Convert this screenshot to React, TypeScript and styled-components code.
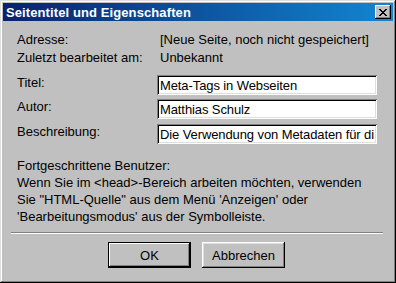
import { styled, createGlobalStyle } from 'styled-components';

const GlobalStyle = createGlobalStyle`
  html, body {
    margin: 0;
    padding: 0;
    background: #c0c0c0;
  }
  * {
    box-sizing: border-box;
  }
`;

const Window = styled.div`
  width: 396px;
  height: 283px;
  padding: 3px;
  display: flex;
  flex-direction: column;
  background: #c0c0c0;
  box-shadow:
    inset -1px -1px #000,
    inset 1px 1px #dfdfdf,
    inset -2px -2px #808080,
    inset 2px 2px #fff;
  font-family: 'Liberation Sans', Arial, sans-serif;
  font-size: 13px;
  color: #000;
`;

const TitleBar = styled.div`
  height: 18px;
  display: flex;
  align-items: center;
  padding: 0 2px 0 3px;
  background: linear-gradient(to right, #08226c, #1286d2);
`;

const Title = styled.div`
  flex: 1;
  color: #fff;
  font-weight: bold;
  font-size: 13px;
  letter-spacing: 0.1px;
`;

const CloseButton = styled.div`
  width: 16px;
  height: 14px;
  display: flex;
  align-items: center;
  justify-content: center;
  background: #c0c0c0;
  box-shadow:
    inset -1px -1px #000,
    inset 1px 1px #fff,
    inset -2px -2px #808080;
`;

const Body = styled.div`
  flex: 1;
  display: flex;
  flex-direction: column;
  padding: 10px 14px 0 14px;
`;

const InfoGrid = styled.div`
  display: grid;
  grid-template-columns: 143px 1fr;
  align-items: start;
`;

const Label = styled.div<{ $top?: number }>`
  line-height: 18px;
  height: 18px;
  margin-top: ${({ $top }) => ($top ? `${$top - 1}px` : '0')};
  white-space: nowrap;
`;

const Value = styled.div`
  line-height: 18px;
  height: 18px;
  white-space: nowrap;
`;

const Field = styled.input<{ $top: number }>`
  display: block;
  width: 220px;
  height: 20px;
  margin-top: ${({ $top }) => $top}px;
  margin-left: -3px;
  padding: 0 3px 0 3px;
  border: none;
  outline: none;
  background: #fff;
  font-family: 'Liberation Sans', Arial, sans-serif;
  font-size: 13px;
  letter-spacing: -0.1px;
  color: #000;
  box-shadow:
    inset 1px 1px #808080,
    inset -1px -1px #fff,
    inset 2px 2px #000,
    inset -2px -2px #dfdfdf;
`;

const Hint = styled.div`
  margin-top: 13px;
  line-height: 17px;
  white-space: nowrap;
`;

const Separator = styled.div`
  margin: 7px -4px 0 -6px;
  height: 2px;
  border-top: 1px solid #808080;
  border-bottom: 1px solid #fff;
`;

const ButtonRow = styled.div`
  display: flex;
  justify-content: center;
  gap: 11px;
  margin-top: 8px;
  padding-right: 3px;
`;

const Button = styled.div<{ $default?: boolean }>`
  width: 83px;
  height: 26px;
  display: flex;
  align-items: center;
  justify-content: center;
  background: #c0c0c0;
  box-shadow: ${({ $default }) =>
    $default
      ? 'inset -1px -1px #000, inset 1px 1px #000, inset -2px -2px #000, inset 2px 2px #fff, inset -3px -3px #808080'
      : 'inset -1px -1px #000, inset 1px 1px #fff, inset -2px -2px #808080, inset 2px 2px #dfdfdf'};
`;

const CloseIcon = () => (
  <svg width="8" height="7" viewBox="0 0 8 7">
    <path d="M0 0h2v1h1v1h2v-1h1v-1h2v1h-1v1h-1v1h-1v1h1v1h1v1h1v1h-2v-1h-1v-1h-2v1h-1v1h-2v-1h1v-1h1v-1h1v-1h-1v-1h-1v-1h-1z" fill="#000" />
  </svg>
);

export default function App() {
  return (
    <>
      <GlobalStyle />
      <Window>
        <TitleBar>
          <Title>Seitentitel und Eigenschaften</Title>
          <CloseButton>
            <CloseIcon />
          </CloseButton>
        </TitleBar>
        <Body>
          <InfoGrid>
            <Label>Adresse:</Label>
            <Value>[Neue Seite, noch nicht gespeichert]</Value>
            <Label>Zuletzt bearbeitet am:</Label>
            <Value>Unbekannt</Value>
            <Label $top={8}>Titel:</Label>
            <Field $top={8} defaultValue="Meta-Tags in Webseiten" />
            <Label $top={4}>Autor:</Label>
            <Field $top={4} defaultValue="Matthias Schulz" />
            <Label $top={5}>Beschreibung:</Label>
            <Field $top={5} defaultValue="Die Verwendung von Metadaten für die Suchmaschinen" />
          </InfoGrid>
          <Hint>
            Fortgeschrittene Benutzer:
            <br />
            Wenn Sie im &lt;head&gt;-Bereich arbeiten möchten, verwenden
            <br />
            Sie "HTML-Quelle" aus dem Menü 'Anzeigen' oder
            <br />
            'Bearbeitungsmodus' aus der Symbolleiste.
          </Hint>
          <Separator />
          <ButtonRow>
            <Button $default>OK</Button>
            <Button>Abbrechen</Button>
          </ButtonRow>
        </Body>
      </Window>
    </>
  );
}
